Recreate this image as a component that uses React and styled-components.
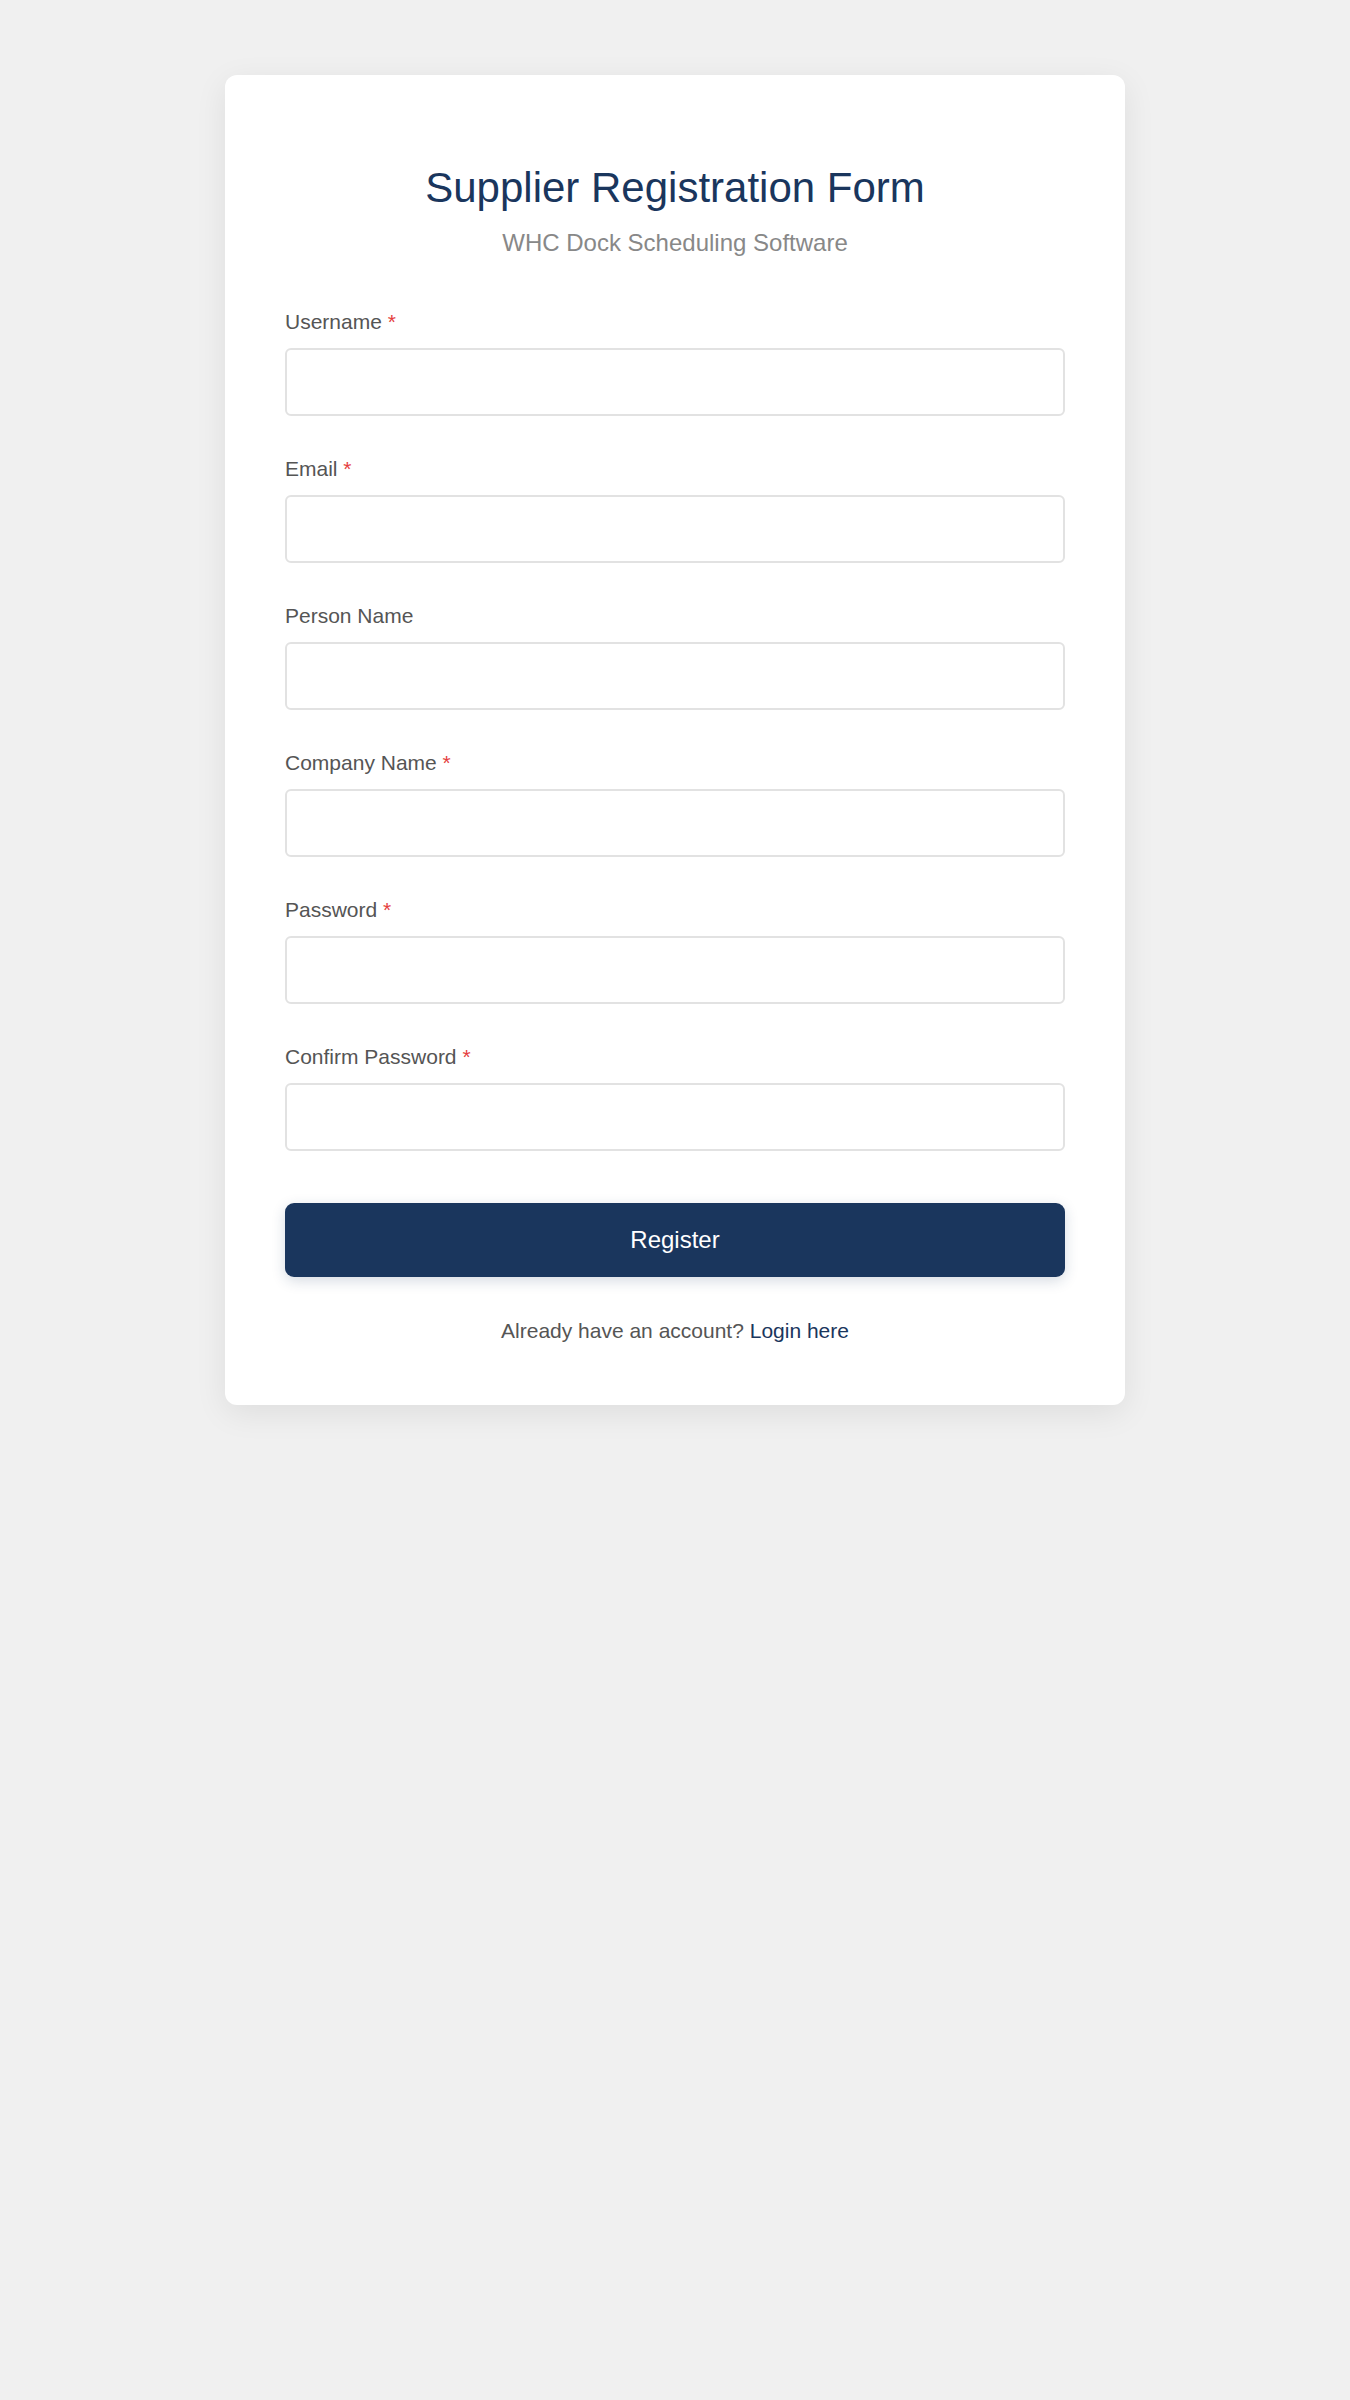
import React from "react";
import styled, { createGlobalStyle } from "styled-components";

const GlobalStyle = createGlobalStyle`
  * { box-sizing: border-box; }
  body {
    margin: 0;
    background: #f0f0f0;
    font-family: "Liberation Sans", Arial, sans-serif;
  }
`;

const Page = styled.div`
  min-height: 2400px;
  padding: 75px 0;
  display: flex;
  justify-content: center;
  align-items: flex-start;
`;

const Card = styled.div`
  width: 900px;
  background: #ffffff;
  border-radius: 12px;
  padding: 60px 60px 58px;
  box-shadow: 0 8px 32px rgba(0, 0, 0, 0.08);
`;

const Header = styled.div`
  text-align: center;
  margin-bottom: 45px;
`;

const Title = styled.h1`
  margin: 28px 0 12px;
  font-size: 42px;
  line-height: 1.2;
  font-weight: 400;
  color: #1a365d;
`;

const Subtitle = styled.p`
  margin: 0;
  font-size: 24px;
  line-height: 36px;
  color: #888888;
`;

const Field = styled.div`
  margin-bottom: ${(p) => (p.$last ? "0" : "37px")};
`;

const Label = styled.label`
  display: block;
  font-size: 21px;
  line-height: 32px;
  color: #555555;
  margin-bottom: 10px;
`;

const Required = styled.span`
  color: #e53e3e;
`;

const Input = styled.input`
  display: block;
  width: 100%;
  height: 68px;
  border: 2px solid #e2e2e2;
  border-radius: 6px;
  padding: 0 16px;
  font-size: 21px;
  font-family: inherit;
  background: #ffffff;
  outline: none;
`;

const Button = styled.button`
  display: block;
  width: 100%;
  height: 74px;
  margin-top: 52px;
  border: none;
  border-radius: 9px;
  background: #1a365d;
  color: #ffffff;
  font-size: 24px;
  font-family: inherit;
  cursor: pointer;
  box-shadow: 0 4px 14px rgba(26, 54, 93, 0.18);
`;

const Footer = styled.p`
  margin: 38px 0 0;
  text-align: center;
  font-size: 21px;
  line-height: 32px;
  color: #555555;
`;

const LoginLink = styled.a`
  color: #1a365d;
  text-decoration: none;
`;

const fields = [
  { label: "Username", required: true, type: "text" },
  { label: "Email", required: true, type: "email" },
  { label: "Person Name", required: false, type: "text" },
  { label: "Company Name", required: true, type: "text" },
  { label: "Password", required: true, type: "password" },
  { label: "Confirm Password", required: true, type: "password" },
];

export default function App() {
  return (
    <>
      <GlobalStyle />
      <Page>
        <Card>
          <Header>
            <Title>Supplier Registration Form</Title>
            <Subtitle>WHC Dock Scheduling Software</Subtitle>
          </Header>
          <form onSubmit={(e) => e.preventDefault()}>
            {fields.map((f, i) => (
              <Field key={f.label} $last={i === fields.length - 1}>
                <Label>
                  {f.label}
                  {f.required && <> <Required>*</Required></>}
                </Label>
                <Input type={f.type} />
              </Field>
            ))}
            <Button type="submit">Register</Button>
          </form>
          <Footer>
            Already have an account? <LoginLink href="#">Login here</LoginLink>
          </Footer>
        </Card>
      </Page>
    </>
  );
}
